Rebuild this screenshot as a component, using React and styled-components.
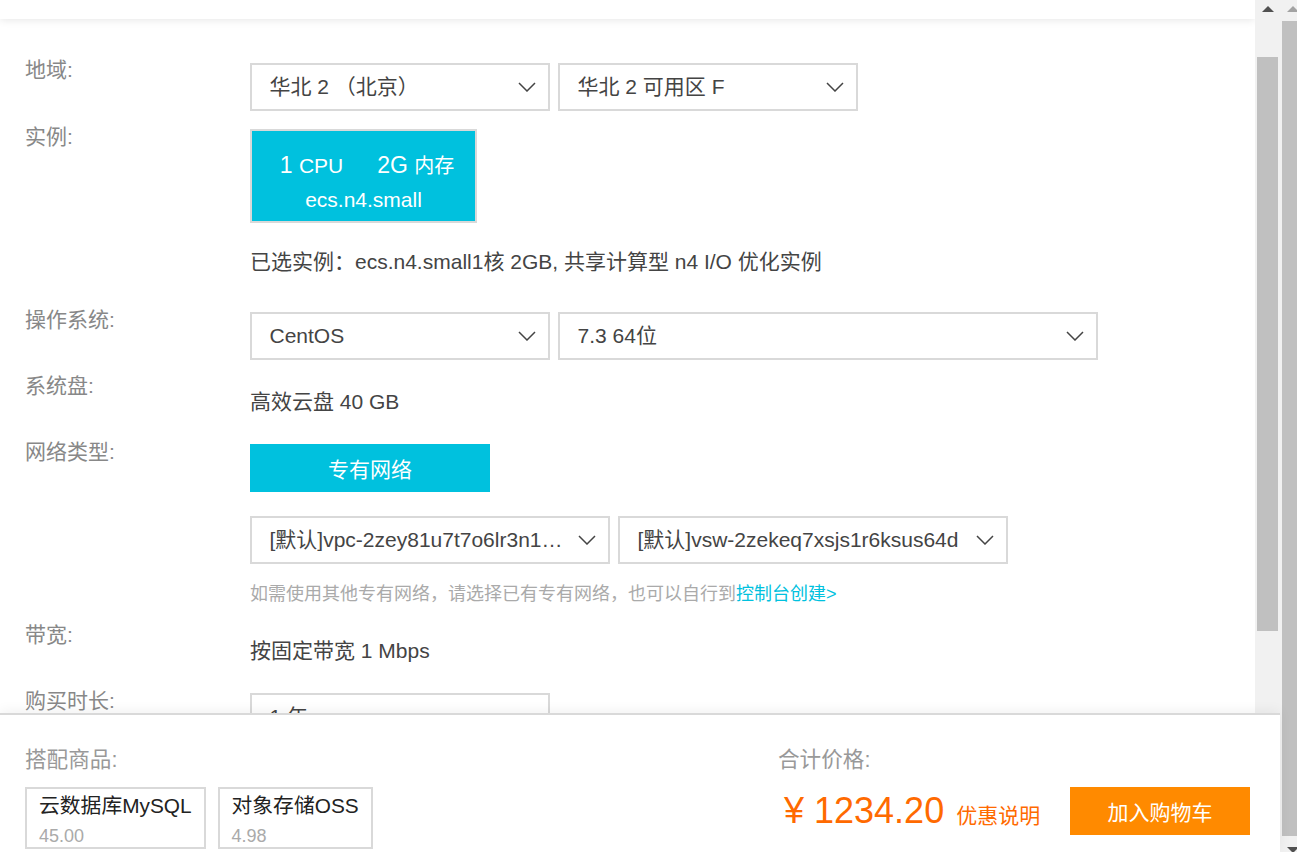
import React from 'react';
import styled, { createGlobalStyle } from 'styled-components';

const Global = createGlobalStyle`
  html, body {
    margin: 0;
    padding: 0;
    height: 100%;
    overflow: hidden;
    background: #fff;
  }
  * { box-sizing: border-box; }
`;

const Page = styled.div`
  width: 1297px;
  height: 852px;
  display: flex;
  overflow: hidden;
  font-family: "Liberation Sans", "Noto Sans CJK SC", sans-serif;
  font-size: 21px;
  color: #444;
`;

const Drawer = styled.div`
  width: 1280px;
  height: 852px;
  flex: none;
  display: flex;
  flex-direction: column;
`;

const Viewport = styled.div`
  height: 713px;
  flex: none;
  display: flex;
  overflow: hidden;
`;

const Content = styled.div`
  width: 1255px;
  height: 713px;
  overflow: hidden;
`;

const TopBar = styled.div`
  height: 19px;
  background: #fff;
  box-shadow: 0 1px 8px rgba(0, 0, 0, 0.1);
  margin-bottom: 44px;
`;

const Row = styled.div`
  display: flex;
  padding-left: 25px;
  margin-bottom: ${p => p.$mb || 18}px;
`;

const Label = styled.div`
  width: 225px;
  flex: none;
  color: #888;
  line-height: 16px;
  margin-top: ${p => p.$mt || 0}px;
`;

const Field = styled.div`
  display: flex;
  flex-direction: column;
`;

const Selects = styled.div`
  display: flex;
  gap: 8px;
`;

const Select = styled.div`
  width: ${p => p.$w}px;
  height: 48px;
  flex: none;
  border: 2px solid #d9d9d9;
  display: flex;
  align-items: center;
  justify-content: space-between;
  padding: 0 12px 0 17.5px;
  color: #444;
  line-height: 44px;
  white-space: nowrap;
  background: #fff;
`;

const Arrow = styled.svg`
  flex: none;
  fill: none;
  stroke: #444;
  stroke-width: 1.5;
`;

const InstanceCard = styled.div`
  width: 227px;
  height: 94px;
  background: #00c1de;
  border: 2px solid #d9d9d9;
  color: #fff;
  display: flex;
  flex-direction: column;
  align-items: center;
  padding-top: 20px;
`;

const CardSpecs = styled.div`
  display: flex;
  gap: 34px;
  font-size: 23px;
  line-height: 28px;
  margin-bottom: 6px;
  padding-left: 7px;
`;

const Small = styled.span`
  font-size: ${p => p.$s}px;
`;

const CardName = styled.div`
  line-height: 28px;
`;

const PlainText = styled.div`
  line-height: 48px;
  height: 48px;
  white-space: nowrap;
  margin-top: ${p => p.$mt || 0}px;
`;

const NetworkButton = styled.div`
  width: 240px;
  height: 48px;
  background: #00c1de;
  color: #fff;
  display: flex;
  align-items: center;
  justify-content: center;
`;

const Hint = styled.div`
  font-size: 18px;
  color: #aaa;
  line-height: 26px;
  margin-top: 17px;
`;

const HintLink = styled.a`
  color: #00c1de;
`;

const ScrollTrack = styled.div`
  width: 25px;
  flex: none;
  background: #f1f1f1;
  display: flex;
  flex-direction: column;
  align-items: center;
`;

const UpArrow = styled.div`
  width: 0;
  height: 0;
  flex: none;
  border-left: 6px solid transparent;
  border-right: 6px solid transparent;
  border-bottom: 6px solid ${p => p.$c};
  margin-top: 6px;
`;

const DownArrow = styled.div`
  width: 0;
  height: 0;
  flex: none;
  border-left: 6px solid transparent;
  border-right: 6px solid transparent;
  border-top: 6px solid ${p => p.$c};
  margin-top: 11px;
`;

const Thumb = styled.div`
  width: 21px;
  height: ${p => p.$h}px;
  flex: none;
  background: #c0c0c0;
  margin-top: ${p => p.$top}px;
`;

const Footer = styled.div`
  height: 139px;
  flex: none;
  position: relative;
  border-top: 2px solid #d9d9d9;
  background: #fff;
  box-shadow: 0 -2px 12px rgba(0, 0, 0, 0.06);
  display: flex;
  justify-content: space-between;
  padding: 0 30px 0 25px;
`;

const FooterLabel = styled.div`
  color: #999;
  font-size: 21.6px;
  line-height: 28px;
  margin-top: 31px;
`;

const Products = styled.div`
  display: flex;
  gap: 12px;
  margin-top: 13px;
`;

const Product = styled.div`
  height: 62px;
  border: 2px solid #d9d9d9;
  padding: 2px 12px 0;
  color: #222;
  font-size: 20.8px;
  line-height: 30px;
`;

const ProductPrice = styled.div`
  color: #aaa;
  font-size: 18px;
  line-height: 30px;
`;

const Total = styled.div`
  width: 472px;
`;

const PriceRow = styled.div`
  display: flex;
  align-items: center;
  justify-content: space-between;
  margin-top: 13px;
  padding-left: 6px;
`;

const Price = styled.div`
  color: #ff6a00;
  font-size: 36px;
  line-height: 48px;
  height: 48px;
  white-space: nowrap;
`;

const Offer = styled.span`
  font-size: 21px;
  margin-left: 12px;
`;

const CartButton = styled.div`
  width: 180px;
  height: 48px;
  background: #ff8a00;
  color: #fff;
  display: flex;
  align-items: center;
  justify-content: center;
`;

const chevron = (
  <Arrow width="18" height="10" viewBox="0 0 18 10">
    <path d="M1 1l8 8 8-8" />
  </Arrow>
);

export default function App() {
  return (
    <Page>
      <Global />
      <Drawer>
        <Viewport>
          <Content>
            <TopBar />
            <Row>
              <Label $mt={-1}>地域:</Label>
              <Selects>
                <Select $w={300}>华北 2 （北京）{chevron}</Select>
                <Select $w={300}>华北 2 可用区 F{chevron}</Select>
              </Selects>
            </Row>
            <Row $mb={26}>
              <Label>实例:</Label>
              <Field>
                <InstanceCard>
                  <CardSpecs>
                    <span>1 <Small $s={21}>CPU</Small></span>
                    <span>2G <Small $s={20}>内存</Small></span>
                  </CardSpecs>
                  <CardName>ecs.n4.small</CardName>
                </InstanceCard>
                <PlainText $mt={15}>已选实例：ecs.n4.small1核 2GB, 共享计算型 n4 I/O 优化实例</PlainText>
              </Field>
            </Row>
            <Row>
              <Label>操作系统:</Label>
              <Selects>
                <Select $w={300}>CentOS{chevron}</Select>
                <Select $w={540}>7.3 64位{chevron}</Select>
              </Selects>
            </Row>
            <Row>
              <Label>系统盘:</Label>
              <PlainText>高效云盘 40 GB</PlainText>
            </Row>
            <Row $mb={24}>
              <Label>网络类型:</Label>
              <NetworkButton>专有网络</NetworkButton>
            </Row>
            <Row $mb={20}>
              <Label />
              <Field>
                <Selects>
                  <Select $w={360}>[默认]vpc-2zey81u7t7o6lr3n1…{chevron}</Select>
                  <Select $w={390}>[默认]vsw-2zekeq7xsjs1r6ksus64d{chevron}</Select>
                </Selects>
                <Hint>如需使用其他专有网络，请选择已有专有网络，也可以自行到<HintLink>控制台创建&gt;</HintLink></Hint>
              </Field>
            </Row>
            <Row>
              <Label>带宽:</Label>
              <PlainText>按固定带宽 1 Mbps</PlainText>
            </Row>
            <Row>
              <Label>购买时长:</Label>
              <Select $w={300}>1 年</Select>
            </Row>
          </Content>
          <ScrollTrack>
            <UpArrow $c="#505050" />
            <Thumb $top={45} $h={574} />
          </ScrollTrack>
        </Viewport>
        <Footer>
          <div>
            <FooterLabel>搭配商品:</FooterLabel>
            <Products>
              <Product>云数据库MySQL<ProductPrice>45.00</ProductPrice></Product>
              <Product>对象存储OSS<ProductPrice>4.98</ProductPrice></Product>
            </Products>
          </div>
          <Total>
            <FooterLabel>合计价格:</FooterLabel>
            <PriceRow>
              <Price>¥ 1234.20<Offer>优惠说明</Offer></Price>
              <CartButton>加入购物车</CartButton>
            </PriceRow>
          </Total>
        </Footer>
      </Drawer>
      <ScrollTrack>
        <UpArrow $c="#a3a3a3" />
        <Thumb $top={9} $h={815} />
        <DownArrow $c="#505050" />
      </ScrollTrack>
    </Page>
  );
}
